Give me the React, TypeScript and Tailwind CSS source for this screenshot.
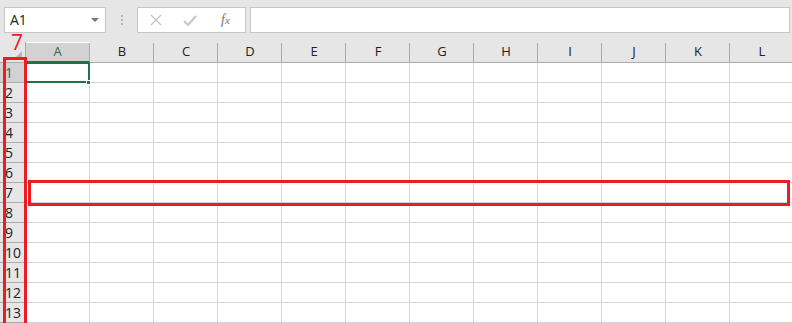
import React from "react";

const cols = ["A", "B", "C", "D", "E", "F", "G", "H", "I", "J", "K", "L"];
const rows = Array.from({ length: 13 }, (_, i) => i + 1);

function FormulaBar() {
  return (
    <div className="h-[42px] bg-[#e6e6e6] flex items-start pt-[7px] pl-[4px] gap-0">
      <div className="w-[102px] h-[26px] bg-white border border-[#c6c6c6] flex items-center justify-between pl-[5px] pr-[6px]">
        <span className="text-[14px] text-[#222] leading-none">A1</span>
        <svg width="8" height="5" viewBox="0 0 8 5">
          <path d="M0 0 L8 0 L4 4 Z" fill="#777" />
        </svg>
      </div>
      <div className="w-[31px] h-[26px] flex flex-col items-center justify-center gap-[2px]">
        <span className="w-[2px] h-[2px] bg-[#b4b4b4]" />
        <span className="w-[2px] h-[2px] bg-[#b4b4b4]" />
        <span className="w-[2px] h-[2px] bg-[#b4b4b4]" />
      </div>
      <div className="w-[109px] h-[26px] bg-white border border-[#c6c6c6] flex items-center">
        <svg className="ml-[12px]" width="12" height="12" viewBox="0 0 12 12">
          <path d="M1 1 L11 11 M11 1 L1 11" stroke="#c6c6c6" strokeWidth="1.4" />
        </svg>
        <svg className="ml-[21px]" width="14" height="11" viewBox="0 0 14 11">
          <path d="M1 6 L5 10 L13 1" stroke="#c6c6c6" strokeWidth="2" fill="none" />
        </svg>
        <span className="ml-[24px] text-[14px] italic text-[#777] leading-none" style={{ fontFamily: "'Liberation Serif', serif" }}>
          f<span className="text-[11px]">x</span>
        </span>
      </div>
      <div className="ml-[4px] flex-1 mr-[2px] h-[26px] bg-white border border-[#c6c6c6]" />
    </div>
  );
}

function Grid() {
  return (
    <div className="relative overflow-hidden h-[281px]">
      <div className="grid grid-cols-[26px_repeat(12,64px)] grid-rows-[21px_repeat(13,20px)]">
        <div className="bg-[#e6e6e6] border-r border-b border-[#ababab] relative">
          <svg className="absolute right-[3px] bottom-[2px]" width="9" height="9" viewBox="0 0 9 9">
            <path d="M9 0 L9 9 L0 9 Z" fill="#b4b4b4" />
          </svg>
        </div>
        {cols.map((c) => (
          <div
            key={c}
            className={
              c === "A"
                ? "bg-[#d2d2d2] text-[#217346] border-b-2 border-b-[#217346] border-r border-r-[#ababab] mt-[1px] flex items-center justify-center text-[13px]"
                : "bg-[#e6e6e6] text-[#222] border-b border-b-[#ababab] flex items-center justify-center text-[13px] relative"
            }
          >
            {c}
            {c !== "A" && <span className="absolute right-0 top-[1px] bottom-0 w-px bg-[#ababab]" />}
          </div>
        ))}
        {rows.map((r) => (
          <React.Fragment key={r}>
            <div
              className={
                r === 1
                  ? "bg-[#d2d2d2] text-[#217346] border-r-2 border-r-[#217346] border-b border-b-[#ababab] flex items-center pl-[5px] text-[14px]"
                  : "bg-[#e6e6e6] text-[#222] border-r border-b border-[#ababab] flex items-center pl-[5px] text-[14px]"
              }
            >
              {r}
            </div>
            {cols.map((c) => (
              <div key={c} className="bg-white border-r border-b border-[#d4d4d4]" />
            ))}
          </React.Fragment>
        ))}
      </div>

      {/* active cell */}
      <div className="absolute left-[25px] top-[20px] w-[65px] h-[21px] border-2 border-[#217346]" />
      <div className="absolute left-[86px] top-[38px] w-[5px] h-[5px] bg-[#217346] border border-white" />

      {/* annotations */}
      <div className="absolute left-[3px] top-[15px] w-[24px] h-[280px] border-[3px] border-[#ed1c24]" />
      <div className="absolute left-[28px] top-[138px] w-[762px] h-[26px] border-[3px] border-[#ed1c24]" />
    </div>
  );
}

export default function App() {
  return (
    <div className="relative w-[792px] h-[323px] overflow-hidden bg-white" style={{ fontFamily: "'Open Sans', 'Noto Sans', sans-serif" }}>
      <FormulaBar />
      <Grid />
      <span className="absolute left-[11px] top-[32px] text-[21px] leading-none text-[#ed1c24]">7</span>
    </div>
  );
}
